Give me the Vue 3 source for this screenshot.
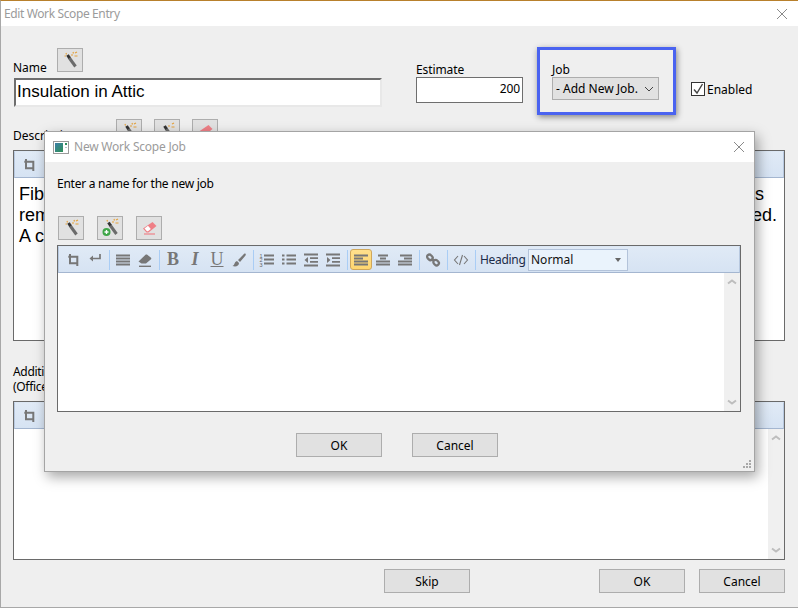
<script setup>
const L = (ys, x1 = 1, x2 = 15) => ys.map((y) => `M${x1} ${y}H${x2}`).join('')
const line = (y, a, b) => `M${a} ${y}H${b}`
const items = [
  { d: 'M5 2v9.300h8.300M3.300 4.700h9V14', w: 2 },
  { d: 'M13 2v4.500H5', f: 'M6 3.500v6L2.500 6.500z' },
  { sep: true },
  { d: L([3.5, 6.5, 9.5, 12.5]), w: 1.8 },
  { f: 'M1.500 9.500 8.500 2.800c.6-.5 1.300-.5 1.800 0l3.700 3c.5.5.5 1 0 1.500L9 11.500H4.500z', d: 'M2 14.300H14', w: 1.4 },
  { sep: true },
  { t: 'B', c: 'bold' },
  { t: 'I', c: 'ital' },
  { t: 'U', c: 'under' },
  { f: 'M14 1.500c1 0 1 1 .5 2L9 10 7 8l5-5c1-1 1-1.500 2-1.500zM6 9l2 2c0 3-3 4-6.500 3 2.500-1 1.500-4 4.500-5z' },
  { sep: true },
  { d: L([3.5, 7.5, 11.5], 5, 15), w: 2, digits: true },
  { d: L([3.5, 7.5, 11.5], 5.5, 15), w: 2, f: 'M1 2.500h2.500v2H1zM1 6.500h2.500v2H1zM1 10.500h2.500v2H1z' },
  { d: L([2.5, 13.5]) + L([6.2, 9.8], 7, 15), w: 1.8, f: 'M5 5v6L1.500 8z' },
  { d: L([2.5, 13.5]) + L([6.2, 9.8], 7, 15), w: 1.8, f: 'M2 5v6l3.500-3z' },
  { sep: true },
  { d: line(3.5, 1, 15) + line(6.5, 1, 10) + line(9.5, 1, 15) + line(12.5, 1, 15), w: 1.8, active: true },
  { d: line(3.5, 3, 13) + line(6.5, 5, 11) + line(9.5, 1, 15) + line(12.5, 1, 15), w: 1.8 },
  { d: line(3.5, 3, 15) + line(6.5, 7, 15) + line(9.5, 1, 15) + line(12.5, 1, 15), w: 1.8 },
  { sep: true },
  { d: 'M2.800 3.200a2.200 2.200 0 0 1 3.200 0l1 1a2.200 2.200 0 0 1-3.200 3.200l-1-1a2.200 2.200 0 0 1 0-3.200zM9 8.500a2.200 2.200 0 0 1 3.200 0l1 1a2.200 2.200 0 0 1-3.200 3.200l-1-1a2.200 2.200 0 0 1 0-3.200zM6.500 6.500l3 3', w: 2.3 },
  { sep: true },
  { d: 'M5 4 1.500 8 5 12M11 4l3.500 4L11 12M9.500 3l-3 10', w: 1.1 },
  { sep: true },
]
const scrollArrowUp = 'M2 5.500 6 2.500l4 3'
const scrollArrowDown = 'M2 2.500l4 3 4-3'
</script>

<template>
  <div class="window">
    <div class="titlebar">
      <span class="title main-title">Edit Work Scope Entry</span>
      <svg class="close" width="12" height="12" viewBox="0 0 12 12"><path d="M1 1l10 10M11 1 1 11" /></svg>
    </div>

    <div class="fields">
      <div class="name-col">
        <div class="name-head">
          <label>Name</label>
          <button class="icon-btn">
            <svg width="24" height="22" viewBox="0 0 24 22">
              <path class="wand" d="M11 8.500 17.500 17.500" />
              <path class="wand-tip" d="M9.500 6 11.500 9" />
              <path class="spark" d="M13 6h2M17 4l2-1M16.500 7h3M15 3l.5 1.500M8 4l.5 1.500M6.500 7h1.500" />
            </svg>
          </button>
        </div>
        <div class="name-input">Insulation in Attic</div>
      </div>

      <div class="estimate-col">
        <label>Estimate</label>
        <div class="estimate-input">200</div>
      </div>

      <div class="job-box">
        <label>Job</label>
        <div class="job-select">
          <span>- Add New Job.</span>
          <svg width="10" height="6" viewBox="0 0 10 6"><path d="M1 1l4 4 4-4" /></svg>
        </div>
      </div>

      <div class="enabled">
        <span class="check">
          <svg width="12" height="12" viewBox="0 0 12 12"><path d="M2 6.500 5 10l5.500-9" /></svg>
        </span>
        <span>Enabled</span>
      </div>
    </div>

    <div class="desc-row">
      <label class="desc-label">Description</label>
      <button class="icon-btn">
        <svg width="24" height="22" viewBox="0 0 24 22">
          <path class="wand" d="M11 8.500 17.500 17.500" />
          <path class="wand-tip" d="M9.500 6 11.500 9" />
          <path class="spark" d="M13 6h2M17 4l2-1M16.500 7h3M15 3l.5 1.500M8 4l.5 1.500" />
        </svg>
      </button>
      <button class="icon-btn">
        <svg width="24" height="22" viewBox="0 0 24 22">
          <path class="wand" d="M11 8.500 17.500 17.500" />
          <path class="wand-tip" d="M9.500 6 11.500 9" />
          <path class="spark" d="M13 6h2M17 4l2-1M16.500 7h3" />
        </svg>
      </button>
      <button class="icon-btn">
        <svg width="24" height="22" viewBox="0 0 24 22">
          <path class="eraser" d="M6 11.500 15.500 5l4 4-8 6.500H9.500z" />
        </svg>
      </button>
    </div>

    <div class="editor desc-editor">
      <div class="toolbar">
        <template v-for="(it, i) in items" :key="i">
          <span v-if="it.sep" class="sep"></span>
          <span v-else-if="it.t" class="tool letter" :class="it.c">{{ it.t }}</span>
          <span v-else class="tool" :class="{ active: it.active }">
            <svg width="16" height="16" viewBox="0 0 16 16">
              <path v-if="it.d" class="ts" :d="it.d" :stroke-width="it.w || 1.700" />
              <path v-if="it.f" class="tf" :d="it.f" />
              <text v-if="it.digits" class="digits" x="0.500" y="5.500">1</text>
              <text v-if="it.digits" class="digits" x="0.500" y="10">2</text>
              <text v-if="it.digits" class="digits" x="0.500" y="14.500">3</text>
            </svg>
          </span>
        </template>
        <span class="heading-label">Heading</span>
        <span class="heading-select">Normal<i class="caret"></i></span>
      </div>
      <div class="desc-text">
        <div class="text-line l1"><span>Fiberglass</span><span>s</span></div>
        <div class="text-line l2"><span>removed</span><span>ed.</span></div>
        <div class="text-line"><span>A c</span></div>
      </div>
    </div>

    <div class="add-label">Additional Notes<br />(Office Use Only)</div>

    <div class="editor add-editor">
      <div class="toolbar">
        <template v-for="(it, i) in items" :key="i">
          <span v-if="it.sep" class="sep"></span>
          <span v-else-if="it.t" class="tool letter" :class="it.c">{{ it.t }}</span>
          <span v-else class="tool" :class="{ active: it.active }">
            <svg width="16" height="16" viewBox="0 0 16 16">
              <path v-if="it.d" class="ts" :d="it.d" :stroke-width="it.w || 1.700" />
              <path v-if="it.f" class="tf" :d="it.f" />
            </svg>
          </span>
        </template>
      </div>
      <div class="edit-body">
        <div class="edit-main"></div>
        <div class="scroll">
          <svg width="12" height="8" viewBox="0 0 12 8"><path :d="scrollArrowUp" /></svg>
          <svg width="12" height="8" viewBox="0 0 12 8"><path :d="scrollArrowDown" /></svg>
        </div>
      </div>
    </div>

    <div class="footer">
      <button class="btn">Skip</button>
      <span class="spacer"></span>
      <button class="btn">OK</button>
      <button class="btn">Cancel</button>
    </div>

    <div class="modal">
      <div class="modal-title">
        <svg width="16" height="13" viewBox="0 0 16 13">
          <defs>
            <linearGradient id="winGrad" x1="0" y1="0" x2="0.800" y2="1">
              <stop offset="0" stop-color="#3d7fa8" />
              <stop offset="1" stop-color="#2f8f5d" />
            </linearGradient>
          </defs>
          <rect x="0.500" y="0.500" width="15" height="12" fill="#fff" stroke="#9a9a9a" />
          <rect x="2" y="2" width="8" height="9" fill="url(#winGrad)" />
          <rect x="12" y="2" width="2" height="2" fill="#2f8f5d" />
          <rect x="12" y="6" width="2" height="1" fill="#b8c4c8" />
        </svg>
        <span class="title job-title">New Work Scope Job</span>
        <svg class="close modal-close" width="12" height="12" viewBox="0 0 12 12"><path d="M1 1l10 10M11 1 1 11" /></svg>
      </div>

      <div class="prompt">Enter a name for the new job</div>

      <div class="modal-actions">
        <button class="icon-btn">
          <svg width="24" height="22" viewBox="0 0 24 22">
            <path class="wand" d="M11 8.500 17.500 17.500" />
            <path class="wand-tip" d="M9.500 6 11.500 9" />
            <path class="spark" d="M13 6h2M17 4l2-1M16.500 7h3M15 3l.5 1.500M8 4l.5 1.500M6.500 7h1.500" />
          </svg>
        </button>
        <button class="icon-btn">
          <svg width="24" height="22" viewBox="0 0 24 22">
            <path class="wand" d="M12 8 18.500 17" />
            <path class="wand-tip" d="M10.500 5.500 12.500 8.500" />
            <path class="spark" d="M14 5h2M18 3l2-1M17.500 6h3M16 2l.5 1.500M9 3l.5 1.500" />
            <circle cx="8.500" cy="15" r="4" fill="#3fa648" />
            <path d="M6.500 15h4M8.500 13v4" stroke="#fff" stroke-width="1.300" fill="none" />
          </svg>
        </button>
        <button class="icon-btn">
          <svg width="24" height="22" viewBox="0 0 24 22">
            <path class="eraser" d="M6 11.500 15.500 5l4 4-8 6.500H9.500z" />
            <path d="M7.500 11.500 10 14.200H11L13.800 12 11 8.800z" fill="#fff" />
            <path d="M7 17H18" stroke="#ef8a90" stroke-width="1.300" fill="none" />
          </svg>
        </button>
      </div>

      <div class="editor modal-editor">
        <div class="toolbar">
          <template v-for="(it, i) in items" :key="i">
            <span v-if="it.sep" class="sep"></span>
            <span v-else-if="it.t" class="tool letter" :class="it.c">{{ it.t }}</span>
            <span v-else class="tool" :class="{ active: it.active }">
              <svg width="16" height="16" viewBox="0 0 16 16">
                <path v-if="it.d" class="ts" :d="it.d" :stroke-width="it.w || 1.700" />
                <path v-if="it.f" class="tf" :d="it.f" />
                <text v-if="it.digits" class="digits" x="0.500" y="5.500">1</text>
                <text v-if="it.digits" class="digits" x="0.500" y="10">2</text>
                <text v-if="it.digits" class="digits" x="0.500" y="14.500">3</text>
              </svg>
            </span>
          </template>
          <span class="heading-label">Heading</span>
          <span class="heading-select">Normal<i class="caret"></i></span>
        </div>
        <div class="edit-body">
          <div class="edit-main"></div>
          <div class="scroll">
            <svg width="12" height="8" viewBox="0 0 12 8"><path :d="scrollArrowUp" /></svg>
            <svg width="12" height="8" viewBox="0 0 12 8"><path :d="scrollArrowDown" /></svg>
          </div>
        </div>
      </div>

      <div class="modal-footer">
        <button class="btn">OK</button>
        <button class="btn">Cancel</button>
      </div>

      <svg class="grip" width="10" height="10" viewBox="0 0 10 10">
        <path d="M7 1h2v2H7zM4 4h2v2H4zM7 4h2v2H7zM1 7h2v2H1zM4 7h2v2H4zM7 7h2v2H7z" />
      </svg>
    </div>
  </div>
</template>

<style scoped>
.window {
  position: relative;
  width: 798px;
  height: 608px;
  box-sizing: border-box;
  border-top: 1px solid #b8802c;
  border-left: 1px solid #a8a8a8;
  border-bottom: 1px solid #a8a8a8;
  background: #efefef;
  overflow: hidden;
  font-family: "Noto Sans", "Open Sans", sans-serif;
  font-size: 12px;
  line-height: 15px;
  color: #000;
}
label { display: block; }
.titlebar {
  height: 25px;
  background: #fff;
  display: flex;
  align-items: center;
  padding-left: 3px;
  padding-right: 10px;
}
.title { color: #9b9b9b; }
.main-title { letter-spacing: -0.38px; }
.job-title { letter-spacing: -0.22px; position: relative; top: -1px; }
.close { margin-left: auto; }
.close path { stroke: #8a8a8a; stroke-width: 1; fill: none; }
.fields {
  display: flex;
  height: 68px;
  margin-top: 21px;
  padding-left: 12px;
}
.name-col { width: 370px; padding-top: 1px; }
.name-head { display: flex; align-items: flex-end; height: 24px; gap: 10px; margin-bottom: 6px; }
.name-head label { margin-bottom: -3px; }
.name-input {
  margin-left: 1px;
  width: 368px;
  height: 29px;
  box-sizing: border-box;
  background: #fff;
  border: 2px solid #e8e8e8;
  border-top-color: #6e6e6e;
  border-left-color: #6e6e6e;
  padding-left: 1px;
  font-family: "Liberation Sans", Arial, sans-serif;
  font-size: 17px;
  line-height: 23px;
}
.estimate-col { width: 107px; margin-left: 33px; padding-top: 15px; letter-spacing: -0.1px; }
.estimate-input {
  height: 26px;
  box-sizing: border-box;
  background: #fff;
  border: 1px solid #6e6e6e;
  text-align: right;
  padding-right: 2px;
  line-height: 21px;
}
.job-box {
  box-sizing: border-box;
  width: 139px;
  margin-left: 14px;
  border: 3px solid #4a63f0;
  padding: 12px 0 0 12px;
  box-shadow: 1px 2px 6px rgba(0, 0, 0, 0.45);
}
.job-select {
  width: 107px;
  height: 23px;
  box-sizing: border-box;
  background: #e1e1e1;
  border: 1px solid #adadad;
  display: flex;
  align-items: center;
  justify-content: space-between;
  padding: 0 4px 0 3px;
}
.job-select path { stroke: #444; fill: none; stroke-width: 1; }
.enabled { display: flex; align-items: center; gap: 2px; margin-left: 15px; padding-top: 35px; height: 14px; }
.check {
  width: 14px;
  height: 14px;
  box-sizing: border-box;
  border: 1px solid #333;
  background: #fff;
  display: flex;
}
.check path { stroke: #444; stroke-width: 1.400; fill: none; }
.desc-row { display: flex; height: 24px; margin-top: 4px; padding-left: 12px; position: relative; }
.desc-label { width: 103px; padding-top: 9px; }
.desc-row .icon-btn { margin-right: 12px; }
.icon-btn {
  width: 26px;
  height: 24px;
  padding: 0;
  box-sizing: border-box;
  background: #e1e1e1;
  border: 1px solid #adadad;
  display: flex;
  align-items: center;
  justify-content: center;
}
.wand { stroke: #6b6b6b; stroke-width: 3; fill: none; }
.wand-tip { stroke: #333; stroke-width: 3; fill: none; }
.spark { stroke: #e5a23c; stroke-width: 1.200; fill: none; }
.eraser { fill: #ef7f86; }
.editor {
  box-sizing: border-box;
  border: 1px solid #6a6a6a;
  background: #fff;
  display: flex;
  flex-direction: column;
  overflow: hidden;
}
.desc-editor { margin: 7px 0 0 12px; width: 772px; height: 191px; }
.add-editor { margin: 7px 0 0 12px; width: 772px; height: 159px; }
.toolbar {
  flex: none;
  height: 27px;
  box-sizing: border-box;
  background: linear-gradient(#e0eaf6, #d6e3f3);
  border: 1px solid #dce7f4;
  border-bottom-color: #a4b6d0;
  border-left-color: #b8c9e0;
  border-right-color: #b8c9e0;
  display: flex;
  align-items: center;
  padding-left: 3px;
}
.tool {
  width: 22px;
  height: 21px;
  box-sizing: border-box;
  display: flex;
  align-items: center;
  justify-content: center;
  flex: none;
}
.tool.active {
  background: linear-gradient(#ffe08c, #ffd670);
  border: 1px solid #cfa75c;
  border-radius: 3px;
}
.ts { stroke: #777; fill: none; }
.tf { fill: #777; }
.digits { font-family: "Liberation Sans", sans-serif; font-size: 5.500px; fill: #666; }
.letter { font-family: "Liberation Serif", serif; font-size: 18px; color: #777; }
.bold { font-weight: 700; }
.ital { font-style: italic; font-weight: 700; }
.under { text-decoration: underline; }
.sep { width: 6px; height: 20px; flex: none; display: flex; justify-content: center; }
.sep::before { content: ""; width: 1px; background: #a9cdf5; }
.heading-label { margin-left: 2px; color: #1c2b48; width: 48px; flex: none; letter-spacing: -0.3px; }
.heading-select {
  position: relative;
  width: 100px;
  height: 22px;
  box-sizing: border-box;
  background: #eaf3fc;
  border: 1px solid #b3c3da;
  padding-left: 2px;
  line-height: 20px;
  flex: none;
  color: #111;
}
.caret {
  position: absolute;
  right: 6px;
  top: 8px;
  border: 3px solid transparent;
  border-top: 4px solid #666;
  border-bottom: 0;
}
.desc-text {
  padding: 6px 0 0 5px;
  font-family: "Liberation Sans", Arial, sans-serif;
  font-size: 18px;
  line-height: 21px;
}
.text-line { display: flex; justify-content: space-between; }
.l1 { padding-right: 20px; }
.l2 { padding-right: 7px; }
.edit-body { flex: 1; display: flex; min-height: 0; }
.edit-main { flex: 1; }
.scroll {
  width: 16px;
  background: #f0f0f0;
  display: flex;
  flex-direction: column;
  justify-content: space-between;
  align-items: center;
  padding: 5px 0;
}
.scroll path { stroke: #bdbdbd; stroke-width: 2; fill: none; }
.add-label { margin: 23px 0 0 12px; height: 30px; letter-spacing: -0.3px; }
.footer { display: flex; margin: 9px 0 0 383px; width: 401px; gap: 14px; }
.spacer { flex: 1; }
.footer .spacer { margin-right: 101px; }
.btn {
  width: 86px;
  height: 24px;
  box-sizing: border-box;
  padding: 0;
  background: #e1e1e1;
  border: 1px solid #adadad;
  font: inherit;
  color: #000;
  flex: none;
}
.modal {
  position: absolute;
  left: 43px;
  top: 130px;
  width: 711px;
  height: 341px;
  box-sizing: border-box;
  border: 1px solid #a4a4a4;
  background: #efefef;
  box-shadow: 3px 5px 12px rgba(0, 0, 0, 0.35);
}
.modal-title {
  height: 30px;
  background: #fff;
  display: flex;
  align-items: center;
  padding: 0 9px 0 8px;
  gap: 5px;
}
.prompt { margin: 14px 0 0 12px; letter-spacing: -0.25px; }
.modal-actions { display: flex; margin: 25px 0 0 13px; gap: 13px; }
.modal-editor { margin: 5px 0 0 12px; width: 684px; height: 167px; }
.modal-footer { display: flex; gap: 30px; margin: 21px 0 0 251px; }
.grip { position: absolute; right: 2px; bottom: 2px; }
.grip path { fill: #a8a8a8; }
</style>

<style>
html, body { margin: 0; background: #efefef; }
</style>
